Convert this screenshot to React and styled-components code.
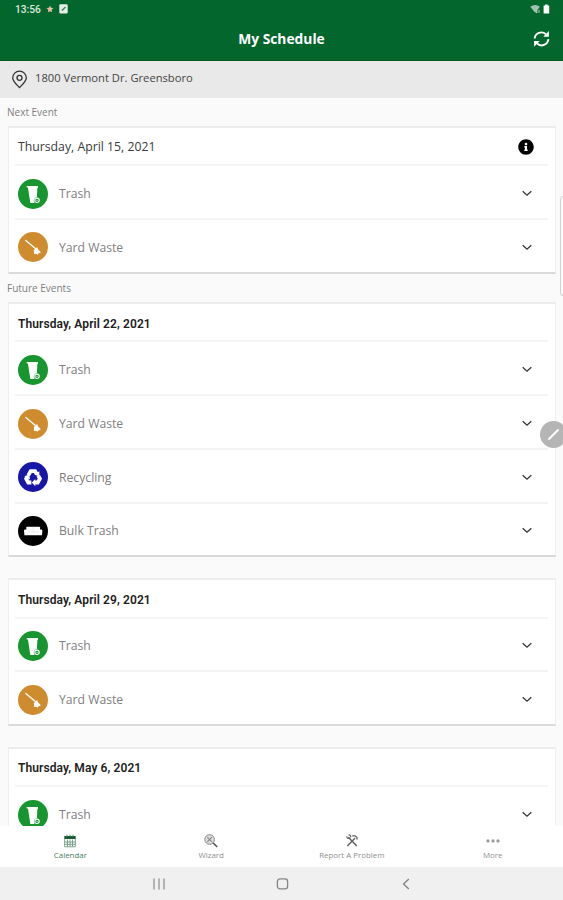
import React from "react"
import styled, { createGlobalStyle } from "styled-components"
import { FaInfoCircle } from "react-icons/fa"

let GlobalStyle = createGlobalStyle`
  * {
    box-sizing: border-box;
  }

  body {
    margin: 0;
    font-family: "Open Sans", "Noto Sans", sans-serif;
  }

  svg {
    display: block;
    flex: none;
  }
`

let Screen = styled.div`
  position: relative;
  display: flex;
  flex-direction: column;
  width: 563px;
  height: 900px;
  overflow: hidden;
  background: #fafafa;
`

let Top = styled.header`
  flex: none;
  height: 60.5px;
  background: #02662d;
  border-bottom: 1px solid #00581c;
  color: #fff;
`

let StatusBar = styled.div`
  display: flex;
  align-items: center;
  justify-content: space-between;
  height: 18px;
  padding: 0 13px 0 15px;
`

let StatusGroup = styled.div`
  display: flex;
  align-items: center;
  gap: ${p => p.$gap}px;
`

let Clock = styled.span`
  width: 26px;
  padding-top: 1px;
  font: 500 10.2px/18px Roboto, sans-serif;
  color: #dcebdf;
`

let TitleBar = styled.div`
  display: grid;
  grid-template-columns: 1fr auto 1fr;
  align-items: center;
  height: 42px;
  padding: 0 13px;
`

let Title = styled.h1`
  grid-column: 2;
  margin: 0;
  font-size: 13.8px;
  font-weight: 700;
  line-height: 20px;
`

let Refresh = styled.div`
  justify-self: end;
`

let Address = styled.div`
  flex: none;
  display: flex;
  align-items: center;
  gap: 7px;
  height: 37px;
  padding: 0 11px;
  background: #e9e9e9;
  color: #444;
  font-size: 11.2px;
  line-height: 16px;
`

let AddressText = styled.span`
  padding-bottom: 2px;
`

let Events = styled.main`
  flex: 1;
  min-height: 0;
  overflow: hidden;
  padding: 0 7px 0 8px;
`

let SectionLabel = styled.h2`
  margin: 0 0 0 -1px;
  height: 28px;
  font-size: 10px;
  font-weight: 400;
  line-height: 29px;
  color: #808080;
`

let Card = styled.section`
  margin-bottom: ${p => p.$gap}px;
  padding: 0 7px 0 6px;
  background: #fff;
  border: 1px solid #efefef;
  border-top: 2px solid #ececec;
  border-bottom: 2px solid #dadada;
`

let CardHead = styled.div`
  display: flex;
  align-items: center;
  justify-content: space-between;
  height: 36.8px;
  padding: 3px 14px 0 3px;
  color: ${p => (p.$next ? "#3a3a3a" : "#222")};
  font: ${p =>
    p.$next
      ? '400 12.25px/18px "Open Sans", sans-serif'
      : "600 12px/18px Roboto, sans-serif"};
  letter-spacing: ${p => (p.$next ? 0 : 0.1)}px;
`

let Row = styled.div`
  display: flex;
  align-items: center;
  height: 53.7px;
  padding: 3px 16px 0 3px;
  border-top: 2px solid #f4f4f4;
`

let Badge = styled.div`
  display: flex;
  align-items: center;
  justify-content: center;
  width: 30px;
  height: 30px;
  border-radius: 50%;
  background: ${p => p.$color};
  color: #fff;
`

let RowLabel = styled.span`
  flex: 1;
  margin-left: 11px;
  padding-top: 1px;
  font-size: 12.2px;
  line-height: 18px;
  color: #808080;
`

let Tabs = styled.nav`
  flex: none;
  display: grid;
  grid-template-columns: repeat(4, 1fr);
  height: 41px;
  background: #fff;
`

let Tab = styled.div`
  display: flex;
  flex-direction: column;
  align-items: center;
  padding-top: 8px;
  color: ${p => (p.$active ? "#3f7d58" : "#8f8f8f")};
  font-size: 7.9px;
  line-height: 12px;
`

let TabIcon = styled.div`
  height: 15px;
`

let SystemNav = styled.div`
  flex: none;
  display: flex;
  align-items: center;
  justify-content: center;
  gap: 111px;
  height: 33px;
  padding: 1px 0 0 1px;
  background: #f0f0f0;
`

let EdgeHandle = styled.div`
  position: absolute;
  top: 196px;
  right: -3px;
  width: 6px;
  height: 100px;
  border: 1px solid #d4d4d4;
  border-radius: 3px;
  background: #f8f8f8;
`

let PenButton = styled.div`
  position: absolute;
  top: 421px;
  left: 540px;
  display: flex;
  align-items: center;
  justify-content: center;
  width: 27px;
  height: 27px;
  border-radius: 50%;
  background: #b5b5b5;
`

let BinIcon = () => (
  <svg width="30" height="30" viewBox="0 0 30 30" fill="#fff">
    <path d="M8.7 7.1h11.3v1.7h-.6l-.5 9.5a3.1 3.1 0 0 0-2.6 4.8l.2.9h-4.2L10 8.8l-1.3-.5z" />
    <circle cx="19" cy="21.3" r="2.2" fill="none" stroke="#fff" strokeWidth="1.1" />
    <circle cx="19" cy="21.3" r="0.6" />
  </svg>
)

let BroomIcon = () => (
  <svg width="30" height="30" viewBox="0 0 30 30" fill="#fff" stroke="#fff">
    <path d="M7.8 8.4l9.6 8" strokeWidth="1.3" strokeLinecap="round" />
    <path d="M19.2 14.9l-3.5 3.4c.5 1.4.4 2.5.3 3.6l2.2-.1 1.3 1 .9-1.3 2.4-1.1-.9-1.3c-1.2-.8-2.3-2.3-2.7-4.2z" stroke="none" />
  </svg>
)

let RecycleIcon = () => (
  <svg width="30" height="30" viewBox="0 0 30 30" fill="none" stroke="#fff" strokeWidth="3.8">
    <path d="M10.2 13.4l2.5-4.2h4.4l1.6 2.8" />
    <path d="M20.2 13.6l1.7 3.1-2.2 3.8h-3.2" />
    <path d="M13.4 20.5h-3.1l-2.1-3.8 1.1-1.9" />
    <g fill="#fff" stroke="none">
      <path d="M21.3 9.3v5.2l-4.8-1.7z" />
      <path d="M17.3 24.3l-3.5-3.8 3.5-3.5z" />
      <path d="M6.3 14.2l4.9-1.6.9 5z" />
    </g>
  </svg>
)

let SofaIcon = () => (
  <svg width="30" height="30" viewBox="0 0 30 30" fill="#fff">
    <path d="M8.3 11.6c0-.5.4-.9.9-.9h12c.5 0 .9.4.9.9V16H8.3z" />
    <path d="M6 14.6c0-1.5 3.2-1.5 3.2 0v1.1h12v-1.1c0-1.5 3.2-1.5 3.2 0l-.4 4.6H6.4z" />
    <path d="M15.2 10.8v4.7M9.5 15.9h11.4" stroke="#ccc" strokeWidth=".4" />
  </svg>
)

let Chevron = () => (
  <svg width="10" height="7" viewBox="0 0 10 7" fill="none" stroke="#333" strokeWidth="1.3">
    <path d="M.7 1.3L5 5.2l4.3-3.9" />
  </svg>
)

let RefreshIcon = () => (
  <svg width="17" height="18" viewBox="0 0 17 18" fill="none" stroke="#fff" strokeWidth="1.9">
    <path d="M1.6 8.5A6.7 6.7 0 0 1 13 4.4M15.4 9.2A6.7 6.7 0 0 1 4 13.4" />
    <path d="M15.9 1v5.8h-5.6zM1.1 16.8V11h5.6z" fill="#fff" stroke="none" />
  </svg>
)

let PinIcon = () => (
  <svg width="17" height="19" viewBox="0 0 17 19" fill="none" stroke="#333" strokeWidth="1.3">
    <path d="M8.5 17.6C5.7 14.5 1.7 11.3 1.7 7.9a6.8 6.8 0 0 1 13.6 0c0 3.4-4 6.6-6.8 9.7z" />
    <circle cx="8.5" cy="7.8" r="2.5" />
  </svg>
)

let CalendarIcon = () => (
  <svg width="12" height="14" viewBox="0 0 12 14">
    <path d="M.3 2h11.4v3H.3z" fill="#175b36" />
    <path d="M3 .7v2M6 .7v2M9 .7v2" stroke="#5d8f72" />
    <path d="M.7 5v7.8h10.6V5M3.5 5.6v7M6 5.6v7M8.5 5.6v7M.7 8h10.6M.7 10.3h10.6" fill="none" stroke="#6d9a80" strokeWidth=".9" />
  </svg>
)

let WizardIcon = () => (
  <svg width="14" height="14" viewBox="0 0 14 14" fill="none" stroke="#888">
    <circle cx="5.6" cy="5.5" r="4.8" fill="#ddd" />
    <path d="M3.3 3.2l4.6 4.6M7.9 3.2L3.3 7.8" strokeWidth="1.1" />
    <path d="M9.2 9l4 4" stroke="#555" strokeWidth="1.7" />
  </svg>
)

let ToolsIcon = () => (
  <svg width="12" height="13" viewBox="0 0 12 13" fill="none" stroke="#666">
    <path d="M2.3 3.2l8.5 8.8M9 4.2L1.3 12" strokeWidth="1.6" />
    <path d="M.7 2.3C.9 4.6 3.1 5 4.3 3.9M2.5.9c1.6-.2 2.5 1 2.2 2.4" strokeWidth="1.2" />
    <path d="M6.3 2.2c1.8-1.3 3.2-.5 4.7 1.4v1.9" strokeWidth="1.4" />
  </svg>
)

let MoreIcon = () => (
  <svg width="14" height="14" viewBox="0 0 14 14" fill="#999">
    <circle cx="2" cy="6.9" r="1.6" />
    <circle cx="7" cy="6.9" r="1.6" />
    <circle cx="12" cy="6.9" r="1.6" />
  </svg>
)

let kinds = {
  trash: { label: "Trash", color: "#17952f", icon: <BinIcon /> },
  yard: { label: "Yard Waste", color: "#ce8c2e", icon: <BroomIcon /> },
  recycling: { label: "Recycling", color: "#1717a6", icon: <RecycleIcon /> },
  bulk: { label: "Bulk Trash", color: "#000", icon: <SofaIcon /> },
}

let futureEvents = [
  { date: "Thursday, April 22, 2021", items: ["trash", "yard", "recycling", "bulk"] },
  { date: "Thursday, April 29, 2021", items: ["trash", "yard"] },
  { date: "Thursday, May 6, 2021", items: ["trash"] },
]

let tabs = [
  { label: "Calendar", icon: <CalendarIcon />, active: true },
  { label: "Wizard", icon: <WizardIcon /> },
  { label: "Report A Problem", icon: <ToolsIcon /> },
  { label: "More", icon: <MoreIcon /> },
]

let EventCard = ({ date, items, next, gap = 20.6 }) => (
  <Card $gap={gap}>
    <CardHead $next={next}>
      {date}
      {next && <FaInfoCircle size={16} color="#000" />}
    </CardHead>
    {items.map(name => (
      <Row key={name}>
        <Badge $color={kinds[name].color}>{kinds[name].icon}</Badge>
        <RowLabel>{kinds[name].label}</RowLabel>
        <Chevron />
      </Row>
    ))}
  </Card>
)

let App = () => (
  <React.Fragment>
    <GlobalStyle />
    <Screen>
      <Top>
        <StatusBar>
          <StatusGroup $gap={5}>
            <Clock>13:56</Clock>
            <svg width="8" height="8" viewBox="0 0 8 8">
              <path d="M4 .5l1 2.2 2.5.3-1.8 1.8.4 2.5L4 6.2 1.9 7.3l.4-2.5L.5 3 3 2.7z" fill="#f0b8a0" />
            </svg>
            <svg width="9" height="10" viewBox="0 0 9 10">
              <rect x=".3" y=".3" width="8.4" height="9.2" rx="1.2" fill="#e4f0e7" />
              <path d="M2.5 7.3l.6-2L6 2.5l1 1-2.9 3z" fill="#4b8462" />
            </svg>
          </StatusGroup>
          <StatusGroup $gap={2}>
            <svg width="11" height="10" viewBox="0 0 11 10">
              <path d="M.3 2.8a7.5 7.5 0 0 1 9.6 0L7 6.4 5.1 8.8z" fill="#9fc2ad" />
              <path d="M6.7 5.8v3M9 5.8v3M5.8 8l.9.9.9-.9" fill="none" stroke="#b9d3c2" />
            </svg>
            <svg width="7" height="10" viewBox="0 0 7 10">
              <path d="M2.1.6h2.6v1h1.5v7.8H.6V1.6h1.5z" fill="#fff" />
            </svg>
          </StatusGroup>
        </StatusBar>
        <TitleBar>
          <Title>My Schedule</Title>
          <Refresh>
            <RefreshIcon />
          </Refresh>
        </TitleBar>
      </Top>
      <Address>
        <PinIcon />
        <AddressText>1800 Vermont Dr. Greensboro</AddressText>
      </Address>
      <Events>
        <SectionLabel>Next Event</SectionLabel>
        <EventCard next date="Thursday, April 15, 2021" items={["trash", "yard"]} gap={0} />
        <SectionLabel>Future Events</SectionLabel>
        {futureEvents.map(event => (
          <EventCard key={event.date} {...event} />
        ))}
      </Events>
      <Tabs>
        {tabs.map(tab => (
          <Tab key={tab.label} $active={tab.active}>
            <TabIcon>{tab.icon}</TabIcon>
            {tab.label}
          </Tab>
        ))}
      </Tabs>
      <SystemNav>
        <svg width="12" height="12" viewBox="0 0 12 12" stroke="#8a8a8a" strokeWidth="1.2">
          <path d="M1 .5v11M6 .5v11M11 .5v11" />
        </svg>
        <svg width="13" height="12" viewBox="0 0 13 12" fill="none" stroke="#858585" strokeWidth="1.3">
          <rect x="1.4" y=".9" width="10.2" height="10" rx="2.6" />
        </svg>
        <svg width="12" height="12" viewBox="0 0 12 12" fill="none" stroke="#858585" strokeWidth="1.4">
          <path d="M8.8 1L3.6 6l5.2 5" />
        </svg>
      </SystemNav>
      <EdgeHandle />
      <PenButton>
        <svg width="13" height="13" viewBox="0 0 13 13" fill="none" stroke="#fff" strokeLinecap="round">
          <path d="M2 11l9-9" strokeWidth="1.9" />
        </svg>
      </PenButton>
    </Screen>
  </React.Fragment>
)

export default App
